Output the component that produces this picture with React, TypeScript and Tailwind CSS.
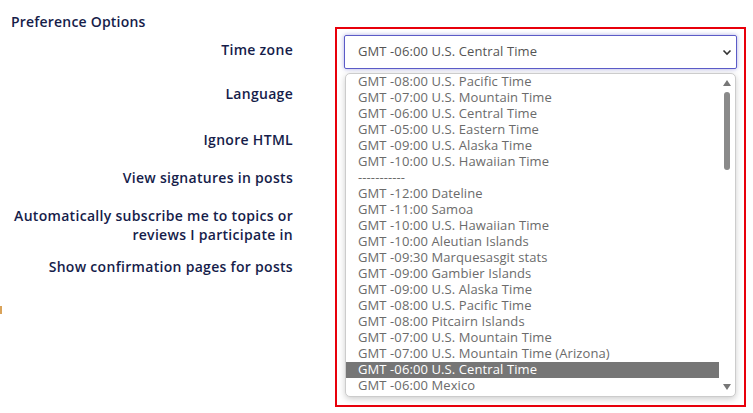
const opts = [
  'GMT -08:00 U.S. Pacific Time',
  'GMT -07:00 U.S. Mountain Time',
  'GMT -06:00 U.S. Central Time',
  'GMT -05:00 U.S. Eastern Time',
  'GMT -09:00 U.S. Alaska Time',
  'GMT -10:00 U.S. Hawaiian Time',
  '-----------',
  'GMT -12:00 Dateline',
  'GMT -11:00 Samoa',
  'GMT -10:00 U.S. Hawaiian Time',
  'GMT -10:00 Aleutian Islands',
  'GMT -09:30 Marquesasgit stats',
  'GMT -09:00 Gambier Islands',
  'GMT -09:00 U.S. Alaska Time',
  'GMT -08:00 U.S. Pacific Time',
  'GMT -08:00 Pitcairn Islands',
  'GMT -07:00 U.S. Mountain Time',
  'GMT -07:00 U.S. Mountain Time (Arizona)',
  'GMT -06:00 U.S. Central Time',
  'GMT -06:00 Mexico',
];

export default function App() {
  return (
    <div className="relative w-[753px] h-[413px] bg-white overflow-hidden text-[#161d4a]" style={{ fontFamily: '"Open Sans", "Noto Sans", sans-serif' }}>
      <div className="pl-[11px] pt-[11px] text-[14px] font-semibold tracking-[0.2px]">Preference Options</div>
      <div className="w-[293px] flex flex-col items-end text-right text-[14px] font-semibold tracking-[0.3px] leading-[19px]">
        <div className="mt-[8px]">Time zone</div>
        <div className="mt-[25px]">Language</div>
        <div className="mt-[27px]">Ignore HTML</div>
        <div className="mt-[19px]">View signatures in posts</div>
        <div className="mt-[19px]">Automatically subscribe me to topics or<br />reviews I participate in</div>
        <div className="mt-[13px]">Show confirmation pages for posts</div>
      </div>
      <div className="absolute left-0 top-[306px] w-[2px] h-[8px] bg-[#d9a35a]" />

      <div className="absolute left-[335px] top-[27px] w-[411px] h-[380px] border-2 border-[#e8000b] bg-white">
        <div className="mx-[7px] mt-[6px] h-[34px] border border-[#5b5bc7] rounded-[2px] shadow-[0_0_4px_rgba(91,91,199,0.5)] flex items-center justify-between pl-[13px] pr-[4px] text-[13px] tracking-[0.1px] text-[#555]">
          <span>GMT -06:00 U.S. Central Time</span>
          <svg width="10" height="10" viewBox="0 0 10 10"><path d="M1.5 3.5 5 7l3.5-3.5" fill="none" stroke="#333" strokeWidth="1.6" /></svg>
        </div>
        <div className="relative mx-[8px] mt-[4px] h-[324px] border border-[#ccc] rounded-[5px] shadow-[0_2px_6px_rgba(0,0,0,0.2)] bg-white overflow-hidden">
          <div className="pr-[16px]">
            {opts.map((o, i) => (
              <div key={i} className={`h-[16px] leading-[15px] pl-[12px] text-[13px] tracking-[0.1px] whitespace-nowrap ${i === 18 ? 'bg-[#767676] text-white' : 'text-[#6b6b6b]'}`}>{o}</div>
            ))}
          </div>
          <div className="absolute right-0 top-0 bottom-0 w-[16px] flex flex-col items-center">
            <svg width="8" height="6" viewBox="0 0 8 6" className="mt-[6px]"><path d="M0 6 4 0l4 6z" fill="#777" /></svg>
            <div className="mt-[6px] w-[6px] h-[78px] rounded-full bg-[#8a8a8a]" />
            <div className="flex-1" />
            <svg width="8" height="6" viewBox="0 0 8 6" className="mb-[6px]"><path d="M0 0h8L4 6z" fill="#777" /></svg>
          </div>
        </div>
      </div>
    </div>
  );
}
